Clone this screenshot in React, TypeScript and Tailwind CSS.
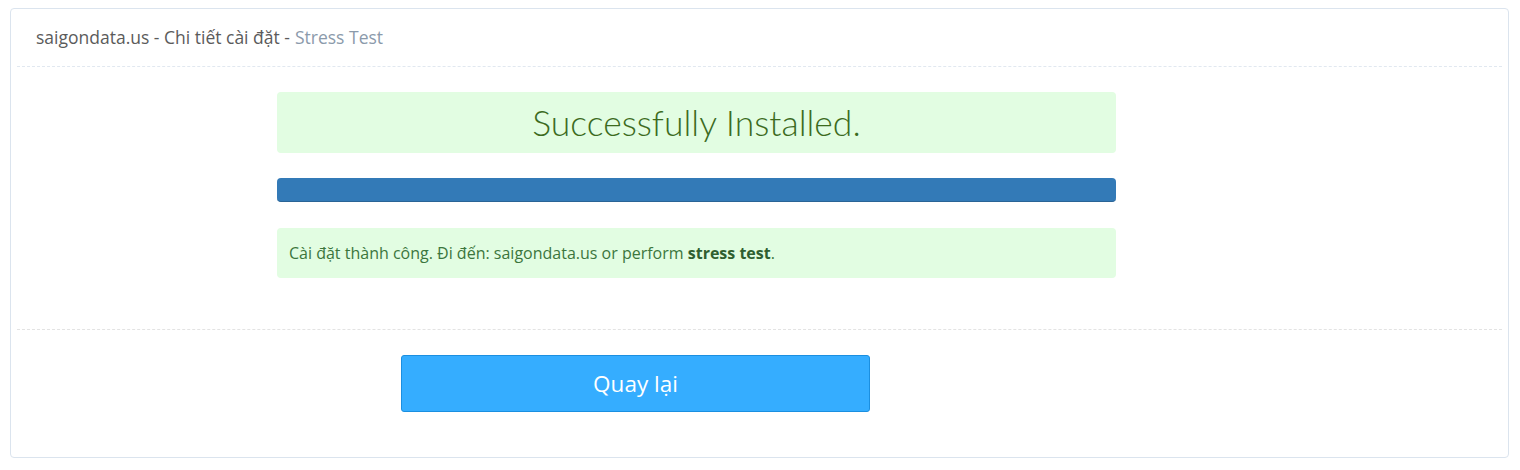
import React from 'react';

const App: React.FC = () => {
  return (
    <div className="min-h-[470px] bg-white pt-[8px] pl-[10px] pr-[11px] font-['Open_Sans',sans-serif]">
      <div className="h-[450px] rounded-[4px] border border-[#dbe4ee] bg-white px-[6px]">
        {/* Header */}
        <div className="flex h-[58px] items-center border-b border-dashed border-[#e1e8f0] pl-[19px] text-[17.5px] text-[#5b5b5b]">
          <span>saigondata.us - Chi tiết cài đặt - </span>
          <span className="ml-[5px] text-[#8b9aab]">Stress Test</span>
        </div>

        {/* Body */}
        <div className="h-[263px] border-b border-dashed border-[#e3e3e3] pt-[25px]">
          <div className="ml-[260px] w-[839px]">
            <div className="flex h-[61px] items-center justify-center rounded-[4px] bg-[#e2fde2] font-['Lato',sans-serif] text-[35.5px] font-light text-[#3c6b1e]">
              Successfully Installed.
            </div>
            <div className="mt-[25px] h-[24px] rounded-[4px] border-b border-[#2a6496] bg-[#337ab7]" />
            <div className="mt-[26px] flex h-[50px] items-center rounded-[4px] bg-[#e2fde2] px-[12px] text-[16px] text-[#3c763d]">
              <span>
                Cài đặt thành công. Đi đến: saigondata.us or perform <b className="font-bold text-[#2f5f30]">stress test</b>.
              </span>
            </div>
          </div>
        </div>

        {/* Footer */}
        <div className="pt-[25px]">
          <button className="ml-[384px] flex h-[57px] w-[469px] items-center justify-center rounded-[3px] border border-[#1b8fe0] bg-[#35adff] text-[22.5px] text-white">
            Quay lại
          </button>
        </div>
      </div>
    </div>
  );
};

export default App;
